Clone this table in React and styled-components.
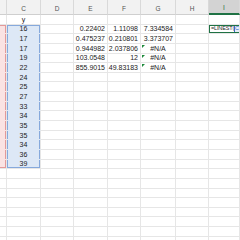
import React from "react";
import styled, { createGlobalStyle } from "styled-components";

const Global = createGlobalStyle`
  html, body { margin: 0; padding: 0; background: #fff; }
  body { font-family: "Liberation Sans", Arial, sans-serif; }
`;

const COLS = [7, 34, 33, 34, 33, 35, 33, 31];
const ROW_H = 9.65;
const TOTAL_ROWS = 24;

const Sheet = styled.div`
  width: 240px;
  height: 240px;
  overflow: hidden;
  display: grid;
  grid-template-columns: ${COLS.map((c) => c + "px").join(" ")};
  grid-template-rows: 15px repeat(${TOTAL_ROWS}, ${ROW_H}px);
  font-size: 7px;
  color: #222;
`;

const Head = styled.div`
  box-sizing: border-box;
  background: ${(p) => (p.$selected ? "#d3d3d3" : "#f2f2f2")};
  border-right: 1px solid #d9d9d9;
  border-bottom: ${(p) => (p.$selected ? "2px solid #1f7244" : "1px solid #cfcfcf")};
  color: ${(p) => (p.$selected ? "#1f6b40" : "#555")};
  display: flex;
  align-items: flex-end;
  justify-content: center;
  padding-bottom: 2px;
  font-size: 6.5px;
`;

const rangeColors = {
  blue: { fill: "#dde8f6", line: "#86a9dc" },
  red: { fill: "#fae3e3", line: "#e39a9a" },
};

const Cell = styled.div`
  position: relative;
  box-sizing: border-box;
  border-right: 1px solid #e6e6e6;
  border-bottom: 1px solid ${(p) => (p.$range && !p.$bottom ? rangeColors[p.$range].fill : "#e6e6e6")};
  background: ${(p) => (p.$range ? rangeColors[p.$range].fill : "#fff")};
  box-shadow: ${(p) => {
    if (!p.$range) return "none";
    const c = rangeColors[p.$range].line;
    const s = [];
    if (p.$left !== false) s.push(`inset 1px 0 0 ${c}`);
    s.push(`inset -1px 0 0 ${c}`);
    if (p.$top) s.push(`inset 0 1px 0 ${c}`);
    if (p.$bottom) s.push(`inset 0 -1px 0 ${c}`);
    return s.join(", ");
  }};
  display: flex;
  align-items: center;
  justify-content: ${(p) =>
    p.$align === "center" ? "center" : p.$align === "left" ? "flex-start" : "flex-end"};
  padding: 0 2px;
  white-space: nowrap;
  line-height: 1;
  ${(p) => (p.$active ? "box-shadow: inset 0 0 0 1px #1f7244; padding: 0 0 0 2px; overflow: hidden;" : "")}
`;

const ErrorMark = styled.span`
  position: absolute;
  left: 1px;
  top: 1px;
  width: 0;
  height: 0;
  border-top: 3px solid #1d8a3a;
  border-right: 3px solid transparent;
`;

const Formula = styled.span`
  color: #1f1f1f;
  font-size: 5.5px;
  letter-spacing: -0.15px;
`;

const Ref = styled.span`
  color: #3a6bc4;
  font-size: 5.5px;
  background: #e7eefa;
  box-shadow: inset 1px 0 0 #3a6bc4;
  padding-left: 1px;
`;

const cValues = [16, 17, 17, 19, 22, 24, 25, 27, 33, 34, 35, 35, 34, 36, 39];
const eVals = ["0.22402", "0.475237", "0.944982", "103.0548", "855.9015"];
const fVals = ["1.11098", "0.210801", "2.037806", "12", "49.83183"];
const gVals = ["7.334584", "3.373707", "#N/A", "#N/A", "#N/A"];
const headers = ["", "C", "D", "E", "F", "G", "H", "I"];

export default function App() {
  const rows = [];
  for (let r = 0; r < TOTAL_ROWS; r++) {
    const dataIdx = r - 1; // row 0 is the "y" row
    const inRange = dataIdx >= 0 && dataIdx < cValues.length;
    const top = dataIdx === 0;
    const bottom = dataIdx === cValues.length - 1;
    const hasNum = dataIdx >= 0 && dataIdx < 5;
    const isErr = hasNum && gVals[dataIdx] === "#N/A";

    rows.push(
      <Cell key={`b${r}`} $range={inRange ? "red" : undefined} $left={false} $top={top} $bottom={bottom} />,
      <Cell
        key={`c${r}`}
        $align="center"
        $range={inRange ? "blue" : undefined}
        $top={top}
        $bottom={bottom}
      >
        {r === 0 ? "y" : inRange ? cValues[dataIdx] : ""}
      </Cell>,
      <Cell key={`d${r}`} />,
      <Cell key={`e${r}`}>{hasNum ? eVals[dataIdx] : ""}</Cell>,
      <Cell key={`f${r}`}>{hasNum ? fVals[dataIdx] : ""}</Cell>,
      <Cell key={`g${r}`} $align={isErr ? "center" : "right"}>
        {isErr && <ErrorMark />}
        {hasNum ? gVals[dataIdx] : ""}
      </Cell>,
      <Cell key={`h${r}`} />,
      dataIdx === 0 ? (
        <Cell key={`i${r}`} $align="left" $active>
          <Formula>=LINEST(</Formula>
          <Ref>C</Ref>
        </Cell>
      ) : (
        <Cell key={`i${r}`} />
      )
    );
  }

  return (
    <>
      <Global />
      <Sheet>
        {headers.map((h, i) => (
          <Head key={i} $selected={h === "I"}>
            {h}
          </Head>
        ))}
        {rows}
      </Sheet>
    </>
  );
}
